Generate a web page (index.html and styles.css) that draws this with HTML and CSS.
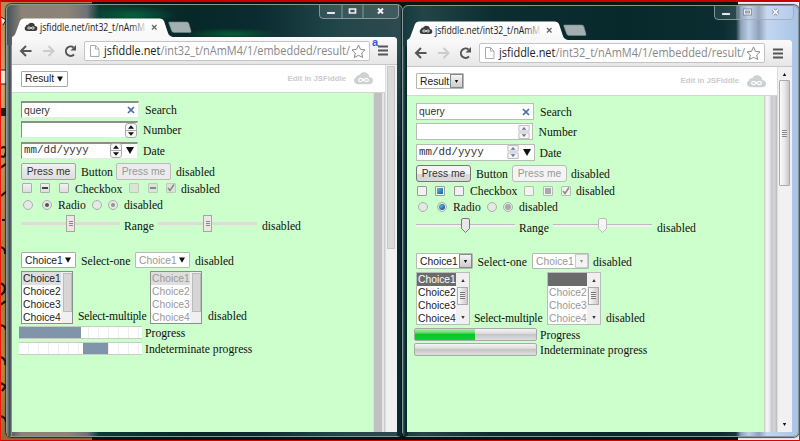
FILE: index.html
```html
<!DOCTYPE html>
<html lang="en"><head><meta charset="utf-8"><title>Form controls</title><link rel="stylesheet" href="styles.css"></head>
<body>
<svg class="defs" aria-hidden="true"><defs>
<linearGradient id="chrome" x1="0" y1="0" x2="0" y2="1"><stop offset="0" stop-color="#fff"/><stop offset="1" stop-color="#f7f7f7"/></linearGradient>
<linearGradient id="fade"><stop offset=".86" stop-color="#222"/><stop offset="1" stop-color="#ddd"/></linearGradient>
<symbol id="cloud" viewBox="0 0 20 13"><path d="M5 12.5C2 12.5 0 11 0 8.800 0 7 1 6 2.300 5.500 2 3.500 4 2.500 5.500 3.200 7 .5 9 0 10.500 0c3.500 0 5.500 2.500 5.500 5 2.500.3 4 1.800 4 3.800s-1.500 3.700-4 3.700z" fill="currentColor"/><path d="M10 8C8.500 6 5 5.500 5 8s3.500 2 5 0 5-2.500 5 0-3.500 2-5 0z" fill="none" stroke="#fff" stroke-width="1.300"/></symbol>
<symbol id="tabs" viewBox="0 0 186 19"><path d="M0 19C2 18 3 17 4 14L8 3Q9 .5 12 .5H148Q151 .5 152 3L156 15Q157 18 161 19z" fill="url(#chrome)"/><use href="#cloud" x="12.500" y="4.500" width="13" height="9" color="#3c3c3c"/><text x="28" y="13" textLength="105" lengthAdjust="spacingAndGlyphs" class="tab-text" fill="url(#fade)">jsfiddle.net/int32_t/nAmM</text><path d="M140 7l4.500 4.500m0-4.500L140 11.500" stroke="#666" stroke-width="1.300"/><path d="M157 4h18q1.500 0 2 2l2 7q.5 1.500-1 1.500h-16q-2 0-2.500-2l-2.500-7q-.5-1.500 0-1.500z" fill="#a2b0b2" stroke="#72878a" stroke-width=".6"/></symbol>
<symbol id="nav" viewBox="0 0 72 28"><path d="M19.500 14H10M14 9l-5 5 5 5" fill="none" stroke="#555" stroke-width="2"/><path d="M31 14h9.500M36.500 9l5 5-5 5" fill="none" stroke="#ccc" stroke-width="2"/><path d="M62 17.500A4.700 4.700 0 1 1 61.500 10.500" fill="none" stroke="#555" stroke-width="2"/><path d="M64 8v5.500h-5.500z" fill="#555"/></symbol>
<symbol id="urlbar" viewBox="0 0 286 20"><path d="M6.500 4.500h5l3.500 3.500v7.500H6.500zM11.500 4.500V8H15" fill="#fff" stroke="#aaa" stroke-width="1"/><text x="20" y="14" textLength="246" lengthAdjust="spacingAndGlyphs" class="url-text"><tspan fill="#222">jsfiddle.net</tspan><tspan fill="#888">/int32_t/nAmM4/1/embedded/result/</tspan></text><path d="M274.500 4l2 4.300 4.500.6-3.300 3.100.9 4.500-4.100-2.200-4.100 2.200.9-4.500-3.300-3.100 4.500-.6z" fill="#fff" stroke="#888" stroke-width="1"/></symbol>
<symbol id="wbtn" viewBox="0 0 80 15"><path d="M.5 0v10q0 3.500 3.500 3.500h72q3.500 0 3.500-3.500V0M23 0v13M44 0v13" fill="#ffffff18" stroke="#9cabae" stroke-width=".8"/><path d="M8 7h8v2H8z" fill="#fff" stroke="#567" stroke-width=".3"/><path d="M30.500 4h6v4h-6z" fill="none" stroke="#456" stroke-width="2.600"/><path d="M30.500 4h6v4h-6z" fill="none" stroke="#eee" stroke-width="1.700"/><path d="M59 3.500l5 5m0-5l-5 5" stroke="#456" stroke-width="3"/><path d="M59 3.500l5 5m0-5l-5 5" stroke="#f5f5f5" stroke-width="2"/></symbol>
<symbol id="menu" viewBox="0 0 10 11"><path d="M0 1.500h10M0 5.500h10M0 9.500h10" stroke="#555" stroke-width="2"/></symbol>
<symbol id="tri" viewBox="0 0 8 7"><path d="M0 0h8L4 7z" fill="currentColor"/></symbol>
<symbol id="spin" viewBox="0 0 12 15"><rect x=".5" y=".5" width="11" height="14" rx="2.500" fill="#f8f8f8" stroke="#aaa"/><path d="M.5 7.500h11" stroke="#aaa"/><path d="M6 2.200L9 5.800H3zM6 12.800L9 9.200H3z" fill="currentColor"/></symbol>
<symbol id="spinbox" viewBox="0 0 12 15"><path d="M.5.5h11v6H.5zM.5 8.500h11v6H.5z" fill="#f4f4f4" stroke="#bbb"/><path d="M6 2.200L8.500 5h-5zM6 12.800L8.500 10h-5z" fill="currentColor"/></symbol>
<symbol id="clear" viewBox="0 0 8 8"><path d="M1 1l6 6M7 1L1 7" stroke="#466ba8" stroke-width="1.700"/></symbol>
<symbol id="check" viewBox="0 0 10 10"><path d="M2 5l2 2.500L8 1.500" fill="none" stroke="#888" stroke-width="1.500"/></symbol>
</defs></svg>
<div class="desk-left"><svg viewBox="0 0 8 441"><path d="M1 17l5 3-3 5M0 70h7v14H0z" fill="#f1ead8" stroke="#2a1a0a"/><path d="M0 108h8v8H0z" fill="#222"/><path d="M1 148q6-3 5 4t-5 4M0 168l6-4M1 196l6-5M2 220h3M0 247q6 1 5 7M0 283q7 2 4 9l-3 3M0 305l6-4M0 325q6 1 6 5M1 357q6 3 4 8M1 383l5 3-4 5M0 416q6 1 6 6" fill="none" stroke="#24170a" stroke-width="2.200"/></svg></div><div class="desk-right"></div>

<section class="win one"><svg class="wbtn"><use href="#wbtn"/></svg>
<svg class="tabs"><use href="#tabs"/></svg>
<div class="view">
<div class="toolbar"><svg class="nav"><use href="#nav"/></svg><div class="url"><svg><use href="#urlbar"/></svg></div><svg class="menu"><use href="#menu"/></svg></div>
<div class="page"><div class="frame">
<div class="head"><div class="sel">Result<svg class="tri"><use href="#tri"/></svg></div><span class="edit">Edit in JSFiddle</span><svg class="cloud"><use href="#cloud"/></svg></div>
<div class="body"><div class="form">
<div class="row search"><div class="field">query<svg class="x"><use href="#clear"/></svg></div><span>Search</span></div>
<div class="row number"><div class="field"><svg class="spin"><use href="#spin"/></svg></div><span>Number</span></div>
<div class="row date"><div class="field mono">mm/dd/yyyy<svg class="spin"><use href="#spin"/></svg><svg class="tri"><use href="#tri"/></svg></div><span>Date</span></div>
<div class="row button"><div class="btn">Press me</div><span>Button</span><div class="btn off">Press me</div><span>disabled</span></div>
<div class="row checks"><i class="cb"></i><i class="cb mix"></i><i class="cb"></i><span>Checkbox</span><i class="cb off"></i><i class="cb mix off"></i><i class="cb off"><svg><use href="#check"/></svg></i><span>disabled</span></div>
<div class="row radios"><i class="rb"></i><i class="rb on"></i><span>Radio</span><i class="rb"></i><i class="rb on off"></i><span>disabled</span></div>
<div class="row range"><div class="slider"><i></i></div><span>Range</span><div class="slider off"><i></i></div><span>disabled</span></div>
<div class="row select"><div class="sel">Choice1<svg class="tri"><use href="#tri"/></svg></div><span>Select-one</span><div class="sel off">Choice1<svg class="tri"><use href="#tri"/></svg></div><span>disabled</span></div>
<div class="row multi"><div class="list"><div class="opts"><b>Choice1</b><b>Choice2</b><b>Choice3</b><b>Choice4</b></div><div class="sb"><i></i></div></div><span class="tight">Select-multiple</span><div class="list off"><div class="opts"><b>Choice1</b><b>Choice2</b><b>Choice3</b><b>Choice4</b></div><div class="sb"><i></i></div></div><span>disabled</span></div>
<div class="row prog"><div class="bar"><i class="fill"></i></div><span>Progress</span></div>
<div class="row prog"><div class="bar"><i class="chunk"></i></div><span>Indeterminate progress</span></div>
</div><div class="inner-sb"></div></div></div>
<div class="outer-sb"><i></i></div></div></div></section>

<section class="win two"><svg class="wbtn"><use href="#wbtn"/></svg>
<svg class="tabs"><use href="#tabs"/></svg>
<div class="view">
<div class="toolbar"><svg class="nav"><use href="#nav"/></svg><div class="url"><svg><use href="#urlbar"/></svg></div><svg class="menu"><use href="#menu"/></svg></div>
<div class="page"><div class="frame">
<div class="head"><div class="sel">Result<em><svg class="tri"><use href="#tri"/></svg></em></div><span class="edit">Edit in JSFiddle</span><svg class="cloud"><use href="#cloud"/></svg></div>
<div class="body"><div class="form">
<div class="row search"><div class="field">query<svg class="x"><use href="#clear"/></svg></div><span>Search</span></div>
<div class="row number"><div class="field"><svg class="spin"><use href="#spinbox"/></svg></div><span>Number</span></div>
<div class="row date"><div class="field mono">mm/dd/yyyy<svg class="spin"><use href="#spinbox"/></svg><svg class="tri"><use href="#tri"/></svg></div><span>Date</span></div>
<div class="row button"><div class="btn">Press me</div><span>Button</span><div class="btn off">Press me</div><span>disabled</span></div>
<div class="row checks"><i class="cb"></i><i class="cb mix"></i><i class="cb"></i><span>Checkbox</span><i class="cb off"></i><i class="cb mix off"></i><i class="cb off"><svg><use href="#check"/></svg></i><span>disabled</span></div>
<div class="row radios"><i class="rb"></i><i class="rb on"></i><span>Radio</span><i class="rb"></i><i class="rb on off"></i><span>disabled</span></div>
<div class="row range"><div class="slider"><svg viewBox="0 0 9 15"><path d="M.5 2q0-1.500 1.500-1.500h5Q8.500.5 8.500 2v8.500l-4 4-4-4z" fill="#e8e8e8" stroke="#777"/></svg></div><span>Range</span><div class="slider off"><svg viewBox="0 0 9 15"><path d="M.5 2q0-1.500 1.500-1.500h5Q8.500.5 8.500 2v8.500l-4 4-4-4z" fill="#f5f5f5" stroke="#bbb"/></svg></div><span>disabled</span></div>
<div class="row select"><div class="sel">Choice1<em><svg class="tri"><use href="#tri"/></svg></em></div><span>Select-one</span><div class="sel off">Choice1<em><svg class="tri"><use href="#tri"/></svg></em></div><span>disabled</span></div>
<div class="row multi"><div class="list"><div class="opts"><b>Choice1</b><b>Choice2</b><b>Choice3</b><b>Choice4</b></div><div class="sb"><svg class="tri up"><use href="#tri"/></svg><i></i><svg class="tri"><use href="#tri"/></svg></div></div><span class="tight">Select-multiple</span><div class="list off"><div class="opts"><b></b><b>Choice2</b><b>Choice3</b><b>Choice4</b></div><div class="sb"><svg class="tri up"><use href="#tri"/></svg><i></i><svg class="tri"><use href="#tri"/></svg></div></div><span>disabled</span></div>
<div class="row prog"><div class="bar"><i class="fill"></i></div><span>Progress</span></div>
<div class="row prog"><div class="bar"></div><span>Indeterminate progress</span></div>
</div><div class="inner-sb"></div></div></div>
<div class="outer-sb"><svg class="tri up"><use href="#tri"/></svg><i><u></u></i><svg class="tri"><use href="#tri"/></svg></div></div></div></section>
<span class="mark">a</span>
<div class="edge"></div>
</body></html>
```
FILE: styles.css
```css
*{box-sizing:border-box}
body{margin:0;width:800px;height:441px;overflow:hidden;position:relative;background:#021b10;font:11.7px/14px "Liberation Serif",serif;color:#111}
svg{display:block}
.defs{position:absolute;width:0;height:0}
i,em{font-style:normal;display:block}
.desk-left{position:absolute;left:0;top:0;width:92px;height:441px;background:linear-gradient(#b18b55,#c8a46b 20%,#a47a3e 60%,#b8843b 85%,#8d6a3b)}
.desk-left svg{width:8px;height:441px}
.desk-right{position:absolute;right:0;top:0;width:62px;height:441px;background:repeating-linear-gradient(#eef1fb 0 19px,#7d7ace 19px 21px,#eef1fb 21px 34px,#889 34px 36px)}
.edge{position:absolute;z-index:3;inset:0;border:1px solid #f01808;border-top:2px solid #c00;border-bottom-color:#d00}
.mark{position:absolute;z-index:2;left:372px;top:36px;font:bold 11px/13px "Liberation Sans",sans-serif;color:#3555e8}

.win{position:absolute;width:397px;border:1px solid #87989b;border-radius:6px;display:flex;flex-direction:column;box-shadow:0 0 1px 1px #111b}
.one{left:6px;top:4px;height:433px;padding:14px 5px 4px;background:radial-gradient(ellipse 45px 9px at 125px 10px,#06603a,transparent),radial-gradient(ellipse 48px 6px at 225px 29px,#075c36,transparent),linear-gradient(90deg,#46525a,#8b8378 15px,#8d8478 60px,#6f7275 80px,#0b3a36 92px,#062827 180px,#0a2b30 250px,#21464a 330px,#2d4a50)}
.two{left:402px;top:5px;height:432px;padding:15px 5px 4px 4px;background:linear-gradient(90deg,#153a3e,#234548 20px,#0d2e30 90px,#07292b 220px,#0c2e32 320px,#15383c 333px,#8fa3ba 338px,#bccfe8 346px,#8fa0ba 356px,#c3d6f1 364px,#a9c4e8)}
.one::before,.two::before{content:"";position:absolute;inset:40px auto 0 0;width:5px;background:linear-gradient(90deg,#8e8c86,#33404a 60%,#aaa)}
.two::before{background:linear-gradient(90deg,#3e555a,#062a2d 50%,#082c30)}
.one::after{content:"";position:absolute;inset:40px 0 0 auto;width:5px;background:linear-gradient(#2d4a50,#062528 30%,#082b2e)}
.wbtn{position:absolute;top:0;width:80px;height:15px}
.one .wbtn{left:312px}.two .wbtn{left:311px}
.tabs{width:186px;height:19px;flex:none}
.one .tabs{margin-top:-1px}
.view{flex:1;min-height:0;display:flex;flex-direction:column;background:#fff;position:relative;z-index:1;width:385px;border-radius:0 4px 0 0;overflow:hidden}
.toolbar{height:28px;flex:none;display:flex;align-items:center;background:linear-gradient(#fafafa,#e6e6e6);border-bottom:1px solid #c6c6c6}
.two .toolbar{height:27px}
.nav{width:72px;height:28px}
.url{width:286px;height:20px;border:1px solid #c4c4c4;border-radius:2px;background:#fff}
.url svg{width:286px;height:20px;margin:-1px}
.menu{width:10px;height:11px;margin-left:8px}
.url-text{font:12.5px "Open Sans",sans-serif}
.tab-text{font:10px "Open Sans",sans-serif}
.page{flex:1;min-height:0;display:flex}
.frame{width:373px;display:flex;flex-direction:column}
.head{height:28px;flex:none;display:flex;align-items:center;padding-left:9px;border-bottom:1px solid #d2d6d2;background:#fff}
.two .head{height:29px}
.head .sel{width:47px}
.two .head .sel{width:48px}
.edit{margin-left:auto;font:bold 7.8px/10px "Liberation Sans",sans-serif;color:#c9cccc}
.cloud{width:19px;height:13px;margin:0 12px 0 8px;color:#ccd1d1}
.two .cloud{margin-right:14px}
.body{flex:1;min-height:0;display:flex}
.form{flex:1;background:#cfc;padding:7px 0 0 9px}
.two .form{padding-top:6px}
.inner-sb{width:12px;background:linear-gradient(90deg,#dedede 0 1px,#c1c1c1 1px 9px,#e6e6e6 9px 11px,#ccc 11px)}
.two .inner-sb{width:13px;margin-right:3px;box-shadow:3px 0 #f6f6f6;background:linear-gradient(90deg,#d0d0d0 0 1px,#f7f7f7 2px,#eee 5px,#c4c4cc 8px,#d8d8dc 10px,#bbb)}
.outer-sb{flex:1;background:#f1f1f1;border-left:1px solid #ddd;display:flex;flex-direction:column;align-items:center;padding-right:1px}
.two .outer-sb{margin-left:-3px}
.one .outer-sb i{width:8px;height:183px;margin-top:1px;background:#dadada;border:1px solid #c8c8c8}
.outer-sb .tri{width:5px;height:3px;margin:6px 0 4px}
.two .outer-sb i{width:11px;height:106px;background:linear-gradient(90deg,#fafafa,#e8e8e8 50%,#c8c8cc);border:1px solid #aaa;border-radius:1px;display:flex;align-items:center;justify-content:center}
.outer-sb u{width:5px;height:7px;background:repeating-linear-gradient(#888 0 1px,#eee 1px 2px)}
.outer-sb .tri:last-child{margin:auto 0 6px}
.up{transform:scaleY(-1)}

.row{display:grid;align-items:center;white-space:nowrap}
.row>span{padding-top:2px;margin-bottom:-1px}
.field,.sel,.btn,.list{font:10.3px/13px "Liberation Sans",sans-serif}
.field{width:118px;height:17px;background:#fff;border:1px solid #e4ece4;border-top:2px solid #8a8f8a;border-left:1px solid #888;display:flex;align-items:center;padding-left:2px;color:#333}
.two .field{border:1px solid #b8bdb8;padding-left:2px}
.x{width:8px;height:8px;margin-left:auto;margin-right:3px}
.spin{width:12px;height:15px;margin-left:auto;color:#111}
.two .spin{color:#6176ae;height:14px;margin-right:2px}
.field.mono{font-family:"Liberation Mono",monospace;font-size:10.8px}
.tri{width:8px;height:7px;flex:none}
.mono .tri{margin:0 3px 0 4px;color:#111}
.mono .spin,.two .mono .spin{margin:0 0 0 auto}
.search{grid-template-columns:124px 1fr;height:19.500px}
.number,.date{grid-template-columns:122px 1fr;height:20.500px}
.number .field,.date .field{width:117px}
.two .number,.two .date{grid-template-columns:122.500px 1fr}
.two .date{grid-template-columns:123.500px 1fr}
.two .date .field{width:119px}
.button{grid-template-columns:60px 35px 60px 1fr;height:21px}
.two .button{grid-template-columns:60px 36px 59px 1fr}
.btn{width:55px;height:17px;border:1px solid #a4a4a4;border-radius:2px;background:linear-gradient(#f0f0f0,#dedede);text-align:center;line-height:15px;color:#333}
.btn.off{background:#ebebeb;border-color:#bbb;color:#999}
.two .btn{border-color:#777;border-radius:3px;background:linear-gradient(#f3f3f3 50%,#d8d8d8 50%)}
.two .btn.off{background:#f4f4f4;border-color:#b8bbb8}
.checks{grid-template-columns:18px 19px 16px 54px 19px 18px 15px 1fr;height:16px;padding-left:1px}
.cb{width:10px;height:10px;border:1px solid #adadad;border-radius:1px;background:linear-gradient(#f2f2f2,#dedede);margin-top:-3px}
.cb.off{border-color:#bcccb8;background:#d9e5d6}
.cb svg{width:10px;height:10px;margin:-1px}
.mix{display:flex;align-items:center;justify-content:center}
.mix::before{content:"";width:6px;height:2px;background:#444}
.mix.off::before{background:#888}
.row.checks>span{padding-top:1px;margin-bottom:0}
.two .cb{background:#f2f2f2;border-color:#9a9a9a;margin-top:-1px}
.two .mix::before{width:6px;height:6px;background:linear-gradient(135deg,#5db8e0,#12639a)}
.two .cb.off{background:#f0f5ef;border-color:#b5bdb5}
.two .mix.off::before{background:#aaa}
.radios{grid-template-columns:19px 16px 34px 16px 16px 1fr;height:16px;padding-left:2px}
.row.radios>span{padding-top:0;margin-bottom:0}
.rb{width:10px;height:10px;border:1px solid #aab0aa;border-radius:50%;background:#e6e8e6;margin-top:-2px;display:flex;align-items:center;justify-content:center}
.rb.on::before{content:"";width:4px;height:4px;border-radius:50%;background:#555}
.rb.on.off::before{background:#8d998b}
.two .rb.on::before{width:6px;height:6px;background:radial-gradient(circle at 2px 2px,#4eb5df,#09436f)}
.two .rb.on.off::before{background:#aaa}
.range{grid-template-columns:103px 34px 104px 1fr;height:28px;padding-bottom:1px}
.row.range>span{padding-top:0;margin-bottom:0}
.slider{width:99px;height:17px;display:flex;align-items:center;justify-content:center;background:linear-gradient(#e0dad9,#e0dad9) center/100% 3px no-repeat;margin-top:-7px}
.slider i{width:9px;height:17px;border:1px solid #a8a4a0;background:linear-gradient(#888,#888) center 5px/4px 1px no-repeat,linear-gradient(#888,#888) center 7px/4px 1px no-repeat,linear-gradient(#888,#888) center 9px/4px 1px no-repeat,#ece6e6}
.two .slider{background:linear-gradient(#bbb 0 1px,#f2f2f2 1px) center/100% 3px no-repeat}
.slider svg{width:9px;height:15px}
.select{grid-template-columns:60px 54px 60px 1fr;height:17px;margin-top:10px}
.two .select{grid-template-columns:61.500px 54.500px 61px 1fr;margin-top:9px}
.sel{width:55px;height:16px;background:#fff;border:1px solid #a9a9a9;border-radius:1px;display:flex;align-items:center;justify-content:space-between;padding:0 4px 0 3px;color:#222}
.sel .tri{width:6px;height:6px;color:#111}
.sel.off{color:#999;border-color:#bbb}
.two .sel{width:57px;padding-right:0;border-color:#b2b8b2}
.sel em{width:13px;height:14px;border:1px solid #888;background:linear-gradient(#f4f4f4,#ccc);display:flex;align-items:center;justify-content:center}
.sel em .tri{width:5px;height:3px}
.sel.off em{border-color:#ccc;background:#f3f3f3}
.sel.off em .tri{color:#999}
.multi{grid-template-columns:57px 72px 58px 1fr;height:54px;margin-top:1.500px}
.two .multi{grid-template-columns:58px 73px 59px 1fr;height:53px;margin-top:2px}
.row.multi>span{align-self:end;margin-bottom:0;padding-top:0}
.two .row.multi>span{margin-bottom:-1px}
.tight{letter-spacing:-.2px}
.list{width:52px;height:53px;border:1px solid #8b8f8b;background:#fff;display:flex;overflow:hidden}
.opts{flex:1;color:#222}
.opts b{display:block;font-weight:400;height:13px;padding-left:1px;line-height:13px}
.opts b:first-child{background:#dedede}
.off .opts{color:#999}
.sb{width:12px;background:#f0f0f0}
.one .sb i{width:9px;height:39px;margin:1px 0 0 2px;background:#d6d6d6;border:1px solid #bbb}
.two .list{width:54px;border:1px solid #b7bdb7}
.two .opts b:first-child{background:#6b6b6b;color:#fff}
.two .sb{width:13px;display:flex;flex-direction:column;align-items:center}
.sb .tri{width:4px;height:3px;margin:6px 0 5px;color:#333}
.sb .tri:last-child{margin:auto 0 5px}
.two .sb i{width:11px;height:18px;border:1px solid #aaa;background:repeating-linear-gradient(#777 0 1px,#eee 1px 2px) center/5px 7px no-repeat,linear-gradient(90deg,#fafafa,#ccc)}
.prog{grid-template-columns:124px 1fr;height:15.500px}
.multi + .prog{margin-top:1px}
.two .multi + .prog{margin-top:2px}
.bar{width:123px;height:13px;margin-left:-2px;border:1px solid #c4cec2;border-width:1px 0;background:repeating-linear-gradient(90deg,#fff 0 9px,#eee 9px 10px);display:flex}
.fill{width:62px;background:#8095aa}
.chunk{width:25px;margin-left:64px;background:#8095aa}
.two .bar{border:1px solid #a9a9a9;border-radius:2px;background:linear-gradient(#f4f4f4,#ddd 40%,#c5c5c5 50%,#dedede)}
.two .fill{width:60px;background:linear-gradient(#b3edb3,#62da68 35%,#02c924 50%,#16cc34)}
```
